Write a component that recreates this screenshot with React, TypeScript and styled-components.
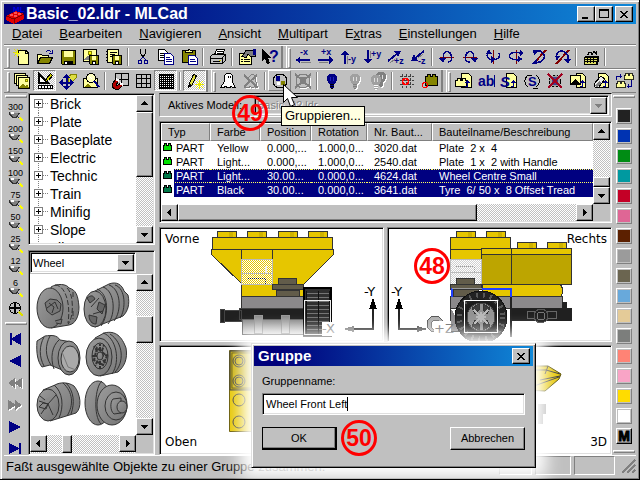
import React, { ReactNode } from "react";
import styled, { createGlobalStyle, css } from "styled-components";

const face = "#c0c0c0";
const shade = "#808080";
const navy = "#000080";
const sans = `"Liberation Sans", Arial, sans-serif`;

const raised = css`
  border: 1px solid;
  border-color: #fff #000 #000 #fff;
  box-shadow: inset -1px -1px 0 ${shade};
`;
const sunken = css`
  border: 1px solid;
  border-color: ${shade} #fff #fff ${shade};
  box-shadow: inset 1px 1px 0 #000, inset -1px -1px 0 #dfdfdf;
`;
const checker = css`
  background: repeating-conic-gradient(#fff 0 25%, ${face} 0 50%) 0 0 / 2px 2px;
`;

const GlobalStyle = createGlobalStyle`
  * { box-sizing: border-box; }
  body { margin: 0; background: ${face}; font-family: ${sans}; color: #000; }
  button, input, select { font-family: inherit; color: inherit; }
  svg { display: block; flex: none; overflow: visible; }
`;

const Window = styled.main`
  position: relative;
  display: grid;
  grid-template-rows: 20px 20px 24px 24px minmax(0, 1fr) 22px;
  height: 100vh;
  padding: 4px 3px 2px 4px;
  background: ${face};
  border-right: 1px solid #000;
  border-bottom: 1px solid #000;
  box-shadow: inset 1px 1px 0 #dfdfdf, inset 2px 2px 0 #fff, inset -1px -1px 0 ${shade};
  overflow: hidden;
`;
const TitleBar = styled.header`
  display: flex;
  align-items: center;
  padding: 0 3px 0 2px;
  color: #fff;
  background: linear-gradient(90deg, #00007b 10%, #1088d8);
`;
const Title = styled.h1<{ $size: number }>`
  flex: 1;
  margin: 0;
  padding-left: 2px;
  font-size: ${(p) => p.$size}px;
  line-height: 20px;
  font-weight: bold;
`;
const CaptionButton = styled.button<{ $gap?: boolean }>`
  ${raised}
  display: flex;
  align-items: center;
  justify-content: center;
  width: 18px;
  height: 16px;
  padding: 0;
  margin-left: ${(p) => (p.$gap ? 2 : 0)}px;
  background: ${face};
`;
const MenuBar = styled.nav`
  display: flex;
  align-items: center;
`;
const MenuItem = styled.button`
  padding: 0 9px 0 8px;
  border: 0;
  background: none;
  font-size: 13px;
  line-height: 18px;
`;
const ToolRow = styled.div`
  display: flex;
  align-items: stretch;
  padding-left: 3px;
  border-top: 1px solid ${shade};
  box-shadow: inset 0 1px 0 #fff;
`;
const Grip = styled.span`
  width: 3px;
  margin-top: 3px;
  border: 1px solid;
  border-color: #fff ${shade} ${shade} #fff;
`;
const BandEdge = styled.span`
  width: 6px;
  margin: 1px 1px 0 0;
  border-left: 2px solid ${shade};
  border-right: 1px solid #fff;
`;
const Separator = styled.span`
  width: 2px;
  margin: 3px 2px 2px;
  border-left: 1px solid ${shade};
  border-right: 1px solid #fff;
`;
const ToolButton = styled.button<{ $state?: "down" | "hover" }>`
  position: relative;
  display: flex;
  align-items: center;
  justify-content: center;
  width: 23px;
  height: 21px;
  margin-top: 1px;
  padding: 0;
  background: none;
  border: 1px solid transparent;
  ${(p) => p.$state === "down" && checker}
  ${(p) => p.$state === "down" && `border-color: ${shade} #fff #fff ${shade};`}
  ${(p) => p.$state === "hover" && `border-color: #fff ${shade} ${shade} #fff;`}
`;
const Tooltip = styled.span`
  position: absolute;
  z-index: 5;
  left: 12px;
  top: 35px;
  padding: 0 3px;
  background: #ffffe1;
  border: 1px solid #000;
  font-size: 13px;
  line-height: 18px;
  white-space: nowrap;
`;
const Pointer = styled.svg`
  position: absolute;
  z-index: 6;
  left: 14px;
  top: 13px;
`;

const Body = styled.div`
  display: grid;
  grid-template-columns: 24px 127px minmax(0, 1fr) 24px;
  min-height: 0;
`;
const Palette = styled.aside`
  display: flex;
  flex-direction: column;
  align-items: center;
  overflow: hidden;
  border-top: 1px solid ${shade};
  border-right: 1px solid ${face};
`;
const HGrip = styled.span<{ $tall?: boolean }>`
  flex: none;
  width: 22px;
  height: 3px;
  margin: ${(p) => (p.$tall ? "2px 0 3px" : "2px 0")};
  border: 1px solid;
  border-color: #fff ${shade} ${shade} #fff;
`;
const PaletteButton = styled.button`
  flex: none;
  display: flex;
  flex-direction: column;
  align-items: center;
  justify-content: center;
  width: 23px;
  height: 22px;
  padding: 0;
  border: 0;
  background: none;
  font-size: 9px;
  line-height: 8px;
`;
const Side = styled.section`
  display: grid;
  grid-template-rows: 152px minmax(0, 1fr);
  gap: 5px;
  min-height: 0;
  padding-top: 1px;
`;
const TreeFrame = styled.div`
  ${sunken}
  display: grid;
  grid-template-columns: minmax(0, 1fr) 17px;
  padding: 1px;
  background: #fff;
  min-height: 0;
`;
const Tree = styled.ul`
  margin: 0;
  padding: 0 0 0 4px;
  list-style: none;
  overflow: hidden;
`;
const TreeItem = styled.li`
  display: flex;
  align-items: center;
  height: 18px;
  font-size: 14px;
  line-height: 18px;
  white-space: nowrap;
`;
const PartsFrame = styled.div`
  ${sunken}
  display: flex;
  flex-direction: column;
  padding: 1px;
  min-height: 0;
`;
const SelectBox = styled.div<{ $flat?: boolean }>`
  ${sunken}
  display: flex;
  align-items: center;
  flex: ${(p) => (p.$flat ? "1" : "none")};
  height: ${(p) => (p.$flat ? 20 : 21)}px;
  margin-right: ${(p) => (p.$flat ? 2 : 17)}px;
  padding: 1px;
  background: ${(p) => (p.$flat ? face : "#fff")};
`;
const Select = styled.select`
  flex: 1;
  min-width: 0;
  padding: 0 1px;
  border: 0;
  appearance: none;
  background: transparent;
  font-size: 11px;
  &:disabled { color: ${shade}; opacity: 1; text-shadow: 1px 1px 0 #fff; }
`;
const PartsGrid = styled.div`
  display: grid;
  flex: 1;
  grid-template-columns: minmax(0, 1fr) 17px;
  grid-template-rows: minmax(0, 1fr) 18px;
  min-height: 0;
  margin-top: 1px;
`;
const PartsCanvas = styled.div`
  overflow: hidden;
  background: #fff;
`;
const Bar = styled.div<{ $row?: boolean }>`
  ${checker}
  display: flex;
  flex-direction: ${(p) => (p.$row ? "row" : "column")};
  min-width: 0;
  min-height: 0;
`;
const BarButton = styled.button`
  ${raised}
  flex: none;
  display: flex;
  align-items: center;
  justify-content: center;
  width: 17px;
  height: 17px;
  padding: 0;
  background: ${face};
`;
const Track = styled.span<{ $grow: number }>`
  flex: ${(p) => p.$grow} 1 0;
`;
const Thumb = styled.span<{ $grow: number }>`
  ${raised}
  flex: ${(p) => p.$grow} 1 0;
  background: ${face};
`;

const Center = styled.section`
  display: grid;
  grid-template-rows: 24px 102px minmax(0, 1fr);
  gap: 4px;
  min-width: 0;
  min-height: 0;
  padding: 1px 0 0 4px;
`;
const ModelBar = styled.div`
  position: relative;
  display: flex;
  align-items: center;
  padding-left: 8px;
  border: 1px solid;
  border-color: #000 #fff #fff ${shade};
`;
const ModelLabel = styled.label`
  width: 86px;
  font-size: 11px;
  white-space: nowrap;
`;
const ListFrame = styled.div`
  ${sunken}
  display: grid;
  grid-template-columns: minmax(0, 1fr) 17px;
  grid-template-rows: minmax(0, 1fr) 17px;
  padding: 1px;
  background: ${face};
`;
const ListArea = styled.div`
  background: #fff;
  overflow: hidden;
`;
const PartTable = styled.table`
  width: 100%;
  table-layout: fixed;
  border-collapse: separate;
  border-spacing: 0;
  font-size: 11px;
  line-height: 14px;
`;
const Th = styled.th<{ $w?: number }>`
  width: ${(p) => (p.$w ? `${p.$w}px` : "auto")};
  height: 18px;
  padding: 0 0 0 6px;
  background: ${face};
  border: 1px solid;
  border-color: #fff ${shade} ${shade} #fff;
  font-weight: normal;
  text-align: left;
  white-space: nowrap;
`;
const Tr = styled.tr<{ $on?: boolean; $focus?: boolean }>`
  color: ${(p) => (p.$on ? "#fff" : "#000")};
  background: ${(p) => (p.$on ? navy : "#fff")};
  td {
    border-top: 1px ${(p) => (p.$focus ? "dotted #ffff60" : "solid transparent")};
    border-bottom: 1px ${(p) => (p.$focus ? "dotted #ffff60" : "solid transparent")};
  }
`;
const Td = styled.td`
  height: 14px;
  padding: 0 0 0 7px;
  line-height: 12px;
  white-space: pre;
  &:first-child { padding: 0; }
`;
const TypeCell = styled.span`
  display: flex;
  gap: 2px;
`;
const TypeIcon = styled.span`
  display: block;
  width: 13px;
  height: 14px;
  margin: -1px 0;
  padding: 2px 0 0 2px;
  background: #fff;
`;

const Views = styled.div`
  display: grid;
  grid-template-columns: repeat(2, minmax(0, 1fr));
  grid-template-rows: 115px minmax(0, 1fr);
  gap: 3px;
  min-height: 0;
`;
const View = styled.figure`
  ${sunken}
  position: relative;
  margin: 0;
  padding: 1px;
  background: #fff;
  overflow: hidden;
`;
const ViewLabel = styled.figcaption<{ $right?: boolean; $bottom?: boolean }>`
  position: absolute;
  ${(p) => (p.$right ? "right: 4px;" : "left: 5px;")}
  ${(p) => (p.$bottom ? "bottom: 4px;" : "top: 3px;")}
  font-family: "DejaVu Sans", sans-serif;
  font-size: 12px;
  line-height: 16px;
`;

const Badge = styled.span<{ $x?: number; $y?: number }>`
  ${(p) => p.$x !== undefined && `position: absolute; left: ${p.$x}px; top: ${p.$y}px;`}
  z-index: 3;
  display: flex;
  flex: none;
  align-items: center;
  justify-content: center;
  width: 36px;
  height: 36px;
  border: 3px solid #f00;
  border-radius: 50%;
  color: #f00;
  font-size: 23px;
  font-weight: bold;
`;

const Swatch = styled.button<{ $c: string }>`
  flex: none;
  width: 16px;
  height: 16px;
  margin-bottom: 4px;
  padding: 0;
  background: ${(p) => p.$c};
  border: 1px solid;
  border-color: #fff ${shade} ${shade} #fff;
  box-shadow: inset 0 0 0 1px ${face};
`;
const MoreButton = styled.button`
  ${raised}
  flex: none;
  width: 16px;
  height: 16px;
  margin-bottom: 4px;
  padding: 0;
  background: ${face};
  font-size: 14px;
  font-weight: 900;
  line-height: 13px;
  -webkit-text-stroke: 1px #000;
`;
const Swatches = styled(Palette)`
  border-right: 0;
`;

const StatusBar = styled.footer`
  display: flex;
  align-items: stretch;
  gap: 3px;
  padding: 0 0 2px;
  border-top: 1px solid #fff;
`;
const StatusText = styled.p`
  flex: 1;
  margin: 0;
  padding-left: 2px;
  font-size: 13px;
  line-height: 22px;
  white-space: nowrap;
`;
const StatusPane = styled.span<{ $w: number }>`
  width: ${(p) => p.$w}px;
  border: 1px solid;
  border-color: ${shade} #fff #fff ${shade};
`;

const Dialog = styled.section`
  position: absolute;
  z-index: 4;
  left: 251px;
  top: 343px;
  width: 285px;
  padding: 2px;
  background: ${face};
  border: 1px solid;
  border-color: #dfdfdf #000 #000 #dfdfdf;
  box-shadow: inset 1px 1px 0 #fff, inset -1px -1px 0 ${shade}, 0 0 16px 10px #fff;
`;
const DialogBody = styled.form`
  display: grid;
  grid-template-rows: 15px 22px auto;
  gap: 4px;
  padding: 8px 8px 9px;
  font-size: 11px;
  line-height: 15px;
`;
const TextBox = styled.div`
  ${sunken}
  display: flex;
  align-items: center;
  padding: 0 3px;
  background: #fff;
`;
const TextInput = styled.input`
  field-sizing: content;
  padding: 0;
  border: 0;
  outline: 0;
  background: none;
  font-size: 11px;
`;
const Caret = styled.span`
  width: 1px;
  height: 14px;
  background: #000;
`;
const Actions = styled.div`
  display: flex;
  align-items: center;
  margin-top: 1px;
  gap: 4px;
`;
const PushButton = styled.button<{ $main?: boolean }>`
  ${raised}
  width: 75px;
  height: 23px;
  padding: 0;
  background: ${face};
  font-size: 11px;
  ${(p) => p.$main && "outline: 1px solid #000; outline-offset: -1px; border-right-width: 2px; border-bottom-width: 2px;"}
`;
const Spacer = styled.span`
  flex: 1;
`;

/* ---------- drawings ---------- */

const Ico = ({ children, w = 18, h = 18 }: { children: ReactNode; w?: number; h?: number }) => (
  <svg width={w} height={h} viewBox={`0 0 ${w} ${h}`} shapeRendering="crispEdges" fill="none" aria-hidden="true">
    {children}
  </svg>
);
const Y = "#ffff9c";
const O = "#848400";
const B = "#000084";
const K = "#000";
const G = "#808080";

const Disk = ({ x = 0, y = 0, s = 13 }) => (
  <g transform={`translate(${x} ${y})`}>
    <path d={`M.5 .5h${s - 1}v${s - 1}h${2 - s}l-1 -1z`} fill={O} stroke={K} />
    <path d={`M3 1h${s - 6}v${Math.floor(s / 2) - 1}h${6 - s}z`} fill={Y} />
    <path d={`M3 ${s - 4}h${s - 6}v3h${6 - s}z`} fill={K} />
    <path d={`M4 ${s - 3}h2v2h-2z`} fill="#fff" />
  </g>
);
const Sheet = ({ x = 0, y = 0, w = 9, h = 12, c = Y }) => (
  <g transform={`translate(${x} ${y})`}>
    <path d={`M.5 .5h${w - 4}l3 3v${h - 4}h${1 - w}z`} fill={c} stroke={K} />
    <path d={`M${w - 4}.5v3h3`} stroke={K} />
  </g>
);
const UpMark = () => <path d="M13.500 14v-6M11 10.500h5M12 9.500h3M13.500 14.500h-3" stroke={B} />;
const Lock = ({ x, y }: { x: number; y: number }) => (
  <path d={`M${x} ${y}h2v-2h3v2h2v-2h3v2h1v6h-11z`} fill={Y} stroke={K} />
);
const Bulb = ({ c, k = c }: { c: string; k?: string }) => (
  <>
    <path d="M6 2h6v1h1v1h1v5h-1v2h-1v1h-1v4h-4v-4h-1v-1h-1v-2h-1v-5h1v-1h1z" fill={c} />
    <path d="M7 12.500h4M7 14.500h4M8 16.500h2" stroke={k} />
    <path d="M7.500 5v4M10.500 5v4" stroke={c === B ? "#2020c0" : "#ddd"} />
  </>
);
const Person = ({ c, w }: { c: string; w: string }) => (
  <path d="M9.500 2.500h2l2 2v4l1 3 1 4h-2l-1 -1 -1 1h-2l-1 -1 -2 1h-3v-1l2 -2 1 -4v-3z" fill={w} stroke={c} />
);
const Tiny = ({ x, y, children }: { x: number; y: number; children: ReactNode }) => (
  <text x={x} y={y} fill={B} fontFamily="Liberation Sans" fontSize="9" fontWeight="bold">
    {children}
  </text>
);

const icons: Record<string, ReactNode> = {
  new: (<><path d="M0 4.500h9M4.500 1v8M1 1l7 7M1 8l7 -7" stroke="#d8d820" /><path d="M5.500 6v-4h7l3 3v11h-10v-8" fill={Y} stroke={K} /><path d="M12.500 2.500v3h3" stroke={K} /><path d="M4.500 3v5M2 5.500h5" stroke="#ff0" /></>),
  open: (<><path d="M1.500 15.500v-9h4l1 1h6v2" fill={Y} stroke={K} /><path d="M1.500 15.500l3 -6h12l-3 6z" fill={O} stroke={K} /><path d="M9.500 4.500l2 -2h2l2 2M13 5.500h4M16.500 2v4" stroke={B} /></>),
  save: <Disk x={2} y={2} s={15} />,
  saveImg: (<><path d="M1.500 1.500h13v12h-13z" fill={Y} stroke={K} /><path d="M2 12l4-5 4 5z" fill={G} /><circle cx="8" cy="5" r="2" fill="#ff0" stroke={O} /><Disk x={7} y={7} s={10} /></>),
  saveText: (<><path d="M2.500 1.500h11v13h-11z" fill={Y} stroke={K} /><path d="M3 3.500h-2M3 6.500h-2M3 9.500h-2M3 12.500h-2M5 4.500h7M5 6.500h5M5 8.500h3" stroke={K} /><Disk x={7} y={7} s={10} /></>),
  cut: (<><path d="M6.500 1v4l3 5M11.500 1v4l-3 5" stroke={K} /><path d="M9 9l-3 3M9 9l3 3" stroke={B} /><path d="M4.500 12.500h3v3h-3zM10.500 12.500h3v3h-3z" stroke={B} /></>),
  copy: (<><Sheet x={1} y={1} w={10} h={12} c="#fff" /><path d="M3 5.500h4M3 7.500h4M3 9.500h4" stroke={K} /><g transform="translate(7 5)"><path d="M.5 .5h6l3 3v8h-9z" fill="#fff" stroke={B} /><path d="M2 4.500h4M2 6.500h6M2 8.500h6" stroke={B} /></g></>),
  paste: (<><path d="M2.500 2.500h13v12h-13z" fill={O} stroke={K} /><path d="M5.500 4.500h7v-2h-2l-1 -1 -2 1h-2z" fill={Y} stroke={K} /><path d="M8.500 7.500h6l3 3v6h-9z" fill="#fff" stroke={B} /><path d="M10 11.500h5M10 13.500h6" stroke={B} /></>),
  print: (<><path d="M5.500 7l2 -5.500h8l-2 5.500" fill="#fff" stroke={K} /><path d="M1.500 8.500l2 -2h13v6l-3 3h-12z" fill={face} stroke={K} /><path d="M2 10.500h11l3 -4M4 13.500h7M8 3.500h6M8 5.500h5M13.500 11v4" stroke={K} /><path d="M10 12h2v1h-2z" fill="#cc0" /></>),
  props: (<><path d="M1.500 5.500h12v11h-12z" fill={Y} stroke={K} /><path d="M3 11.500h2M6 11.500h6M3 13.500h2M6 13.500h6" stroke={K} /><path d="M4 8.500l4 -6h9v6h-4l-3 -2-2 3z" fill={G} stroke={K} /><path d="M15 1h3v6h-3z" fill={B} /></>),
  help: (<><path d="M1 1v12l3-3 2 6 3-1-2-5h4z" fill={K} /><text x="8" y="14" fontFamily="Liberation Sans" fontSize="16" fontWeight="bold" fill={B}>?</text></>),
  xm: (<><Tiny x={6} y={7}>-x</Tiny><path d="M2 11h14v2h-14z" fill={B} /><path d="M6 8v8l-4-4z" fill={B} /><path d="M7 14.500h10" stroke={G} /></>),
  xp: (<><Tiny x={4} y={7}>+x</Tiny><path d="M1 11h14v2h-14z" fill={B} /><path d="M12 8v8l4-4z" fill={B} /><path d="M2 14.500h9" stroke={G} /></>),
  ym: (<><Tiny x={8} y={14}>-y</Tiny><path d="M4 3h2v13h-2z" fill={B} /><path d="M1 7h8l-4-5z" fill={B} /><path d="M7.500 8v8" stroke={G} /></>),
  yp: (<><Tiny x={8} y={9}>+y</Tiny><path d="M4 2h2v13h-2z" fill={B} /><path d="M1 11h8l-4 5z" fill={B} /><path d="M7.500 3v7" stroke={G} /></>),
  zp: (<><Tiny x={8} y={16}>+z</Tiny><path d="M2 13l10-8" stroke={B} strokeWidth="2" /><path d="M8 3h7l-3 6z" fill={B} /><path d="M4 15l5-4" stroke={G} /></>),
  zm: (<><Tiny x={9} y={16}>-z</Tiny><path d="M15 3l-10 8" stroke={B} strokeWidth="2" /><path d="M2 13l3-7 4 7z" fill={B} /><path d="M9 10l5-4" stroke={G} /></>),
  rx1: (<><path d="M2 9.500h14" stroke="#800000" /><path d="M5.500 11c-2-10 8-10 8-1 0 3-2 4-4 4" stroke={B} strokeWidth="1.500" /><path d="M1 10h7l-3 5z" fill={B} /></>),
  rx2: (<><path d="M2 9.500h14" stroke="#800000" /><path d="M12.500 11c2-10-8-10-8-1 0 3 2 4 4 4" stroke={B} strokeWidth="1.500" /><path d="M10 10h7l-3 5z" fill={B} /></>),
  ry1: (<><path d="M9.500 2v14" stroke="#800000" /><path d="M4 5c-5 9 15 9 11 0" stroke={B} strokeWidth="1.500" /><path d="M2 6h6l-3 -5zM7 8l5 3-5 4z" fill={B} /></>),
  ry2: (<><path d="M9.500 2v14" stroke="#800000" /><path d="M14 5c-15-3-15 7-3 7" stroke={B} strokeWidth="1.500" /><path d="M13 2v6l4-3zM11 8v6l5-3z" fill={B} /></>),
  rz1: (<><path d="M3 16l13-14" stroke="#800000" strokeWidth="2" /><path d="M4 3h6c8 3 4 13-5 11" stroke={B} strokeWidth="1.500" /><path d="M3 2h6l-5 5zM7 10v6h-5z" fill={B} /></>),
  rz2: (<><path d="M3 16l13-14" stroke="#800000" strokeWidth="2" /><path d="M4 12c-3-10 8-12 11-4v5" stroke={B} strokeWidth="1.500" /><path d="M2 8h5l-3 5zM11 11h7l-3 5z" fill={B} /></>),
  brick: (<><path d="M2 9h13v7h-13z" fill="#dede63" stroke={K} /><path d="M3 8.500h13v5l-2 2M3 11.500h12M3 13.500h12M5.500 8v7M8.500 8v7M11.500 8v7M5 6.500h1l1 -2h2l1 2 2-3 2 2v-3" stroke={K} /></>),
  pics: (<><path d="M1.500 1.500h11v10h-11z" fill={Y} stroke={K} /><path d="M3.500 3.500h11v10h-11z" fill={Y} stroke={K} /><path d="M5.500 5.500h11v11h-11z" fill={Y} stroke={K} /><path d="M6 16l4-5 2 3 2-2 2 4z" fill={O} /><path d="M12 7h2v2h-2z" fill="#ff0" stroke={O} /></>),
  draw: (<><path d="M3 2v9h9z" fill="#fff" stroke={K} strokeWidth="2" /><path d="M2.500 13.500h14v3h-14z" fill="#fff" stroke={K} /><path d="M5.500 14v2M8.500 14v2M11.500 14v2M14.500 14v2" stroke={K} /><path d="M9.500 9.500l1-3 4-5 2 2-4 5z" fill="#cc0" stroke={K} /></>),
  move: (<><path d="M9 5l4-3h4v4l-5 5h-3z" fill="#dede40" stroke={O} /><path d="M7.500 4v12M2 10.500h12" stroke={B} strokeWidth="2" /><path d="M4 6h7l-3.500-4zM4 14h7l-3.500 4zM4 7v7l-4-3.500zM11 7v7l4-3.500z" fill={B} /></>),
  zoomPic: (<><path d="M1.500 6.500h14v9h-14z" fill={Y} stroke={K} /><path d="M2 15l4-4 3 4z" fill={O} /><circle cx="9" cy="6" r="4.500" fill="#ffffc0" stroke={K} /><path d="M12 9l5 6" stroke={B} strokeWidth="2" /><path d="M7 4l3 3" stroke="#fff" /></>),
  magnet: (<><path d="M4.500 1.500h13v12h-13zM5 7.500h12M10.500 2v11" stroke={K} /><path d="M1 12l4-5 3 2-3 4 1 1 4-3 2 2-4 4h-4l-3-2z" fill="#b00000" stroke={K} /><path d="M5 7l3 2M9 11l3 2" stroke="#fff" strokeWidth="2" /></>),
  grid: (<path d="M2.500 2.500h14v13h-14zM7.500 2v14M12.500 2v14M2 6.500h14M2 11.500h14" stroke={K} />),
  fine: (<><path d="M2 2h15v15h-15z" fill={K} /><path d="M3 4.500h13M3 6.500h13M3 8.500h13M3 10.500h13M3 12.500h13M3 14.500h13" stroke="#fff" strokeDasharray="1 1" /></>),
  wand: (<><path d="M2.500 15.500l1-4 4-9 3 1-4 9z" fill="#dede40" stroke={K} /><path d="M2 15l2-3 2 1z" fill={K} /><path d="M9 12.500h9M13.500 8v9M10 9l7 7M10 16l7-7" stroke="#e8e800" /></>),
  ghost: (<><path d="M7.500 1.500h4l2 2v6l1 3 2 3h-3l-1 -1-2 1h-2l-2 -1-2 1h-3l2 -3 2-3v-6z" fill="#fff" stroke={K} /><path d="M9 4h1v2h-1zM11 4h1v2h-1z" fill={K} /></>),
  noGhost: (<><g transform="translate(1 1)"><Person c="#fff" w={face} /></g><Person c={G} w={face} /><path d="M2 3l13 12M15 3l-13 12" stroke={G} strokeWidth="2" /></>),
  group: (<><circle cx="9" cy="9" r="7" fill={face} stroke={K} /><path d="M5 4h4v5h-4z" fill={B} /><path d="M6 10h3v3h-3z" fill="#fff" /><path d="M10 9h4v4h-4z" fill={O} /></>),
  ungroup: (<><circle cx="10" cy="10" r="7" stroke="#fff" /><circle cx="9" cy="9" r="7" fill={face} stroke={G} /><path d="M6 5h6v7h-6z" fill={G} /><path d="M1 2l16 14M17 2l-16 14" stroke={G} strokeWidth="2" /></>),
  bulb: <Bulb c={B} k={K} />,
  bulbOff: (<><g transform="translate(1 1)"><Bulb c="#fff" /></g><Bulb c="#a0a0a0" k={G} /></>),
  bulbs: (<><g transform="translate(4 -1)"><Bulb c="#fff" /></g><g transform="translate(3 -2)"><Bulb c={G} /></g><g transform="translate(-2 1)"><Bulb c="#a0a0a0" k="#fff" /></g></>),
  snap: (<><path d="M4.500 2v14M8.500 2v14M12.500 2v14M2 4.500h14M2 8.500h14M2 12.500h14" stroke="#404040" strokeDasharray="3 1" /><circle cx="7.500" cy="9.500" r="3" stroke="#f00" strokeWidth="1.500" /></>),
  origin: (<><path d="M4.500 4.500h2v-2h3v2h2v-2h3v2h2v9h-12z" fill={O} stroke={K} /><circle cx="4" cy="13" r="2.500" stroke="#f00" /></>),
  addPart: (<><Sheet x={7} y={1} w={11} h={15} /><Lock x={1.500} y={8.500} /><UpMark /></>),
  ab: (<><text x="1" y="14" fontFamily="Liberation Sans" fontSize="14" fontWeight="bold" fill={B}>ab</text><path d="M17.500 3v12" stroke={B} /></>),
  sUp: (<><Sheet x={6} y={1} w={11} h={15} /><text x="0" y="15" fontFamily="Liberation Sans" fontSize="15" fontWeight="bold" fontStyle="italic" fill={B}>S</text><UpMark /></>),
  sRot: (<><path d="M5 15a7 7 0 0 1-1-11M13 3a7 7 0 0 1 0 12M4 3h5M10 16h5" stroke={K} /><text x="5" y="14" fontFamily="Liberation Sans" fontSize="13" fontWeight="bold" fill={B}>S</text></>),
  sDel: (<><circle cx="9" cy="9" r="6" fill="#a0a0a0" stroke={K} strokeDasharray="3 2" /><path d="M6 5h6v8h-6z" fill={B} opacity=".6" /><path d="M2 2l14 14M16 2l-14 14" stroke="#a00020" strokeWidth="2" /></>),
  imgUp: (<><Sheet x={7} y={1} w={10} h={15} /><path d="M1.500 3.500h10v9h-10z" fill={Y} stroke={K} /><path d="M2 12l4-5 5 5z" fill={K} /><UpMark /></>),
  erase: (<><Sheet x={6} y={1} w={11} h={15} /><path d="M2 12l7-8 4 3-6 8h-4z" fill="#eee" stroke={K} /><path d="M3 13l4 -4 2 2-3 4h-2z" fill={G} /><UpMark /></>),
  swap: (<><g transform="translate(8 -3) scale(.8)"><Lock x={1.500} y={7.500} /></g><g transform="translate(0 5) scale(.8)"><Lock x={1.500} y={7.500} /></g><path d="M1.500 8v-4h5M5 2v4M16.500 8v6h-5M13 12v4" stroke={B} /></>),
};

const Tool = ({ name, state, children }: { name: string; state?: "down" | "hover"; children?: ReactNode }) => (
  <ToolButton type="button" aria-label={name} $state={state}>
    <Ico>{icons[name]}</Ico>
    {children}
  </ToolButton>
);
const Tools = ({ names, down = [] }: { names: string[]; down?: string[] }) => (
  <>
    {names.map((n, i) =>
      n === "|" ? <Separator key={i} /> : <Tool key={i} name={n} state={down.includes(n) ? "down" : undefined} />
    )}
  </>
);

const arrows = { up: "M4 2h1v1h1v1h1v1h1v1h-7v-1h1v-1h1v-1h1z", down: "M1 3h7v1h-1v1h-1v1h-1v1h-1v-1h-1v-1h-1v-1h-1z", left: "M6 1v7h-1v-1h-1v-1h-1v-1h-1v-1h1v-1h1v-1h1v-1z", right: "M3 1v7h1v-1h1v-1h1v-1h1v-1h-1v-1h-1v-1h-1v-1z" };
const Arrow = ({ dir, c = K }: { dir: keyof typeof arrows; c?: string }) => (
  <Ico w={9} h={9}><path d={arrows[dir]} fill={c} /></Ico>
);
const Scroll = ({ row, parts }: { row?: boolean; parts: [number, number, number] }) => (
  <Bar $row={row}>
    <BarButton type="button" aria-label="Zurück"><Arrow dir={row ? "left" : "up"} /></BarButton>
    {parts[0] > 0 && <Track $grow={parts[0]} />}
    <Thumb $grow={parts[1]} />
    {parts[2] > 0 && <Track $grow={parts[2]} />}
    <BarButton type="button" aria-label="Weiter"><Arrow dir={row ? "right" : "down"} /></BarButton>
  </Bar>
);

const Lens = () => (
  <Ico w={16} h={9}>
    <path d="M2 1h9v3h-1v1h-1v1h-5v-1h-1v-1h-1z" fill={G} />
    <path d="M2 0h9v2h-9z" fill="#b0b0b0" />
    <path d="M3 1h3v2h-3z" fill="#fff" />
    <path d="M1.500 1v2l3 3h4l3-4M9 5l4 4" stroke="#303030" />
    <path d="M12 7l3 3" stroke="#ff0" strokeWidth="1.500" />
  </Ico>
);
const Close = () => (
  <Ico w={10} h={9}><path d="M1 1h2v1h1v1h2v-1h1v-1h2v1h-1v1h-1v1h-1v1h1v1h1v1h1v1h-2v-1h-1v-1h-2v1h-1v1h-2v-1h1v-1h1v-1h1v-1h-1v-1h-1v-1h-1z" fill={K} /></Ico>
);
const navPaths: [string, string][] = [
  ["M3 2h2v5l9-5v12l-9-5v5h-2z", B],
  ["M2 8l12-6v12z", B],
  ["M1 8l7-5v4l7-4v10l-7-4v4z", G],
  ["M15 8l-7-5v4l-7-4v10l7-4v4z", G],
  ["M14 8l-12-6v12z", B],
  ["M12 2h2v11h-2v-5l-10 5v-11l10 5z", B],
];

const Wheels = () => (
  <svg width="108" height="160" viewBox="29 274 108 160" stroke="#333" strokeWidth="1" aria-hidden="true">
    <defs>
      <linearGradient id="metal" x1="0" y1="0" x2="1" y2="1">
        <stop offset="0" stopColor="#9c9c9c" /><stop offset="1" stopColor="#747474" />
      </linearGradient>
    </defs>
    <g fill="url(#metal)">
      <path d="M50 287c6-4 16-3 18 1 7 2 9 7 10 19 0 10-4 17-10 18l-18 3z" />
      <path d="M54 285c10 0 16 18 13 38M66 288c7 6 7 30 1 36M72 292v7M72 311v8" fill="none" strokeDasharray="5 2" />
      <ellipse cx="49" cy="308" rx="13" ry="20" /><path d="M44 303l5-4 7 1 4 4-1 7-8 4-5-4zM48 303l5 4-2 6M46 308l8-6 3 7M54 321l7-2-1 5-5-1" fill="#777" />
    </g>
    <g fill="url(#metal)">
      <path d="M94 291l14-7c8-3 13 1 15 7l4 4c2 9 0 16-5 21l-28 11z" />
      <path d="M96 289c12 5 12 26 4 37M102 287c12 4 13 27 5 37M108 285c12 4 13 26 5 36M114 285c11 3 11 25 5 33" fill="none" />
      <ellipse cx="94" cy="309" rx="11" ry="18" /><path d="M86 298c4-3 6-3 8 1l-5 4zM98 302l6 3-3 9-5-5zM88 315l8 2-1 7c-4 0-7-3-7-9zM90 307l8-9M92 314l10-3" fill="#666" />
    </g>
    <g fill="url(#metal)">
      <path d="M36 341l8-5c7-1 12-1 15 4l12 2v32l-22-9-8 2c-4-5-6-13-5-26z" />
      <path d="M43 337c-5 9-5 20 0 29M49 336c-5 9-5 20 1 29M58 340c-7 6-9 18-5 29" fill="none" />
      <ellipse cx="68" cy="358" rx="11" ry="17" /><ellipse cx="69" cy="359" rx="9" ry="13" fill="#aaa" /><path d="M61 352l6 15 8 3" fill="none" stroke="#777" />
    </g>
    <g fill="url(#metal)">
      <path d="M94 338l9-5c12-3 18 4 22 15 2 11-2 19-8 24l-18 4z" />
      <path d="M102 333c13 4 18 28 9 41M109 334c14 9 14 29 5 38" fill="none" />
      <ellipse cx="98" cy="357" rx="13" ry="19" /><ellipse cx="99" cy="356" rx="8" ry="13" fill="#888" />
      <path d="M99 356l-6-10M99 356l-8 0M99 356l-5 10M99 356v13M99 356l6 8M99 356l8-1M99 356l4-11M99 356v-12M96 348l-3 12 9 5 4-9z" fill="none" strokeWidth="2" strokeDasharray="4 1" /><ellipse cx="99" cy="356" rx="3" ry="4" />
    </g>
    <g fill="url(#metal)">
      <path d="M42 390l12-5c5-3 13-3 19 1 7 8 8 22 2 27l-26 8z" />
      <path d="M53 385c9 7 10 22 5 33M62 383c10 9 11 22 4 33M65 383c8 8 9 20 5 31" fill="none" />
      <ellipse cx="47" cy="405" rx="11" ry="16" /><path d="M38 401l9 3 8-9M47 404l-7 10M47 404l5 11M39 396l5 4M42 403l-4 4 7 2 2-5z" fill="#888" />
    </g>
    <g fill="url(#metal)">
      <ellipse cx="97" cy="403" rx="13" ry="22" /><path d="M101 381c-7 5-9 35-1 43" fill="none" />
      <ellipse cx="111" cy="405" rx="15" ry="20" /><ellipse cx="115" cy="406" rx="11" ry="14" /><path d="M112 399l8-1v15l-7 1c-4-3-4-12-1-15z" /><ellipse cx="121" cy="407" rx="5" ry="6" />
    </g>
  </svg>
);

const axisFont = { fontFamily: "DejaVu Sans", fontSize: 13 };
const Mesh = ({ id, c }: { id: string; c: string }) => (
  <pattern id={id} width="2" height="2" patternUnits="userSpaceOnUse">
    <path d="M0 0h2v2h-2z" fill="#fff" /><path d="M0 0h1v1h-1zM1 1h1v1h-1z" fill={c} />
  </pattern>
);
const studs = (xs: number[], y: number, c = "#e6c600") =>
  xs.map((x) => (
    <g key={x}>
      <path d={`M${x} ${y}h19v6h-19z`} fill={c} stroke="#333" />
      <path d={`M${x + 12} ${y + 1}h4v5h-4z`} fill="#b89e00" opacity=".5" stroke="none" />
    </g>
  ));

const Front = () => (
  <svg width="222" height="111" viewBox="160 230 222 111" shapeRendering="crispEdges" fill="none" strokeWidth="1" aria-hidden="true">
    <defs>
      <Mesh id="meshFront" c="#e6c600" />
      <linearGradient id="low" x1="0" y1="0" x2="0" y2="1"><stop offset="0" stopColor="#888" /><stop offset="1" stopColor="#ddd" /></linearGradient>
    </defs>
    {studs([216, 246, 277, 307], 232)}
    <g stroke="#333" fill="#e6c600">
      <path d="M210.500 250.500h122v5l-30 30h-61l-31-30z" />
      <path d="M211.500 238.500h120v12h-120zM240.500 250.500h31v10h-31z" />
      <path d="M240.500 285.500h62v12h-62z" />
    </g>
    <path d="M240 260h31v25h-31z" fill="url(#meshFront)" />
    <path d="M240.500 260.500h31v25h-31zM240.500 274h31" stroke="#bbb" />
    <path d="M247 279.500h17.500v5" stroke="#222" strokeDasharray="1 1" />
    <path d="M265 267v7" stroke="#eee" strokeWidth="2" />
    <g stroke="#333" fill="#625c4a">
      <path d="M277.500 279.500h18v6h-18zM275.500 291.500h23v6h-23zM271.500 285.500h31v5h-31z" />
    </g>
    <path d="M240.500 297.500h62v12h-62z" fill="#8b898b" stroke="#333" />
    <path d="M238.500 309.500h64v11h-64zM219.500 310.500h4v13h-4zM223.500 311.500h17v11h-17z" fill="#202020" stroke="#444" />
    <path d="M241 320h61v15h-61z" fill="url(#low)" stroke="#666" />
    <path d="M253.500 316.500h8v18h-8zM280.500 316.500h8v18h-8z" fill="url(#low)" stroke="#999" />
    <path d="M303 289h27v48h-27z" fill="#303030" stroke="#000" strokeWidth="2" />
    <path d="M306 294h22M306 298h22M306 302h22M306 306h22M306 310h22M306 314h22M306 318h22M306 322h22M306 326h22M306 330h22" stroke="#757575" />
    <path d="M317.500 292v43M305.500 292v43M328.500 292v43" stroke="#111" />
    <path d="M303.500 301.500h26v34h-26z" stroke="#eee" />
    <path d="M321 323h18v14h-18z" fill="#fff" />
    <text x="321" y="334" {...axisFont} fill="#888">-X</text>
    <text x="363" y="297" {...axisFont} fill="#000">-Y</text>
    <path d="M372 309v21h-24" stroke="#222" strokeWidth="2" />
    <path d="M372 299l4 11h-8z" fill="#000" /><path d="M342 330l11-3v6z" fill="#777" />
  </svg>
);
const RightSide = () => (
  <svg width="222" height="111" viewBox="389 230 222 111" shapeRendering="crispEdges" fill="none" aria-hidden="true">
    <defs><Mesh id="meshRight" c="#d0d0d0" /></defs>
    {studs([456, 486], 232)}
    {studs([517, 547], 243)}
    <g stroke="#333" fill="#e6c600">
      <path d="M450.500 238.500h60v12h-60zM450.500 250.500h31v10h-31z" />
      <path d="M481.500 249.500h90v6h-90z" />
      <path d="M481.500 255.500h90v30h-90z" fill="#bda500" />
      <path d="M511.500 249v36" />
      <path d="M482.500 285.500h78l2 4v5l-2 3h-78z" />
    </g>
    <path d="M450 260h31v25h-31z" fill="url(#meshRight)" />
    <path d="M450.500 260.500h31v25h-31zM451 273.500h30" stroke="#bbb" />
    <path d="M456 267.500h18v6" stroke="#999" strokeDasharray="1 1" />
    <g stroke="#333" fill="#625c4a"><path d="M456.500 279.500h18v6h-18zM450.500 285.500h31v5h-31zM453.500 290.500h25v7h-25z" /></g>
    <path d="M450.500 297.500h112v12h-112zM450.500 309v23h14" fill="#8b898b" stroke="#333" />
    <path d="M511.500 309.500h60v12h-60zM562.500 303.500h4v6h-4z" fill="#202020" stroke="#222" />
    <path d="M527 312h11v7h-11zM545 312h11v7h-11z" stroke="#666" />
    <circle cx="541" cy="317" r="7" fill="#202020" stroke="#555" /><circle cx="541" cy="317" r="4" stroke="#777" />
    <path d="M482 289.500h29" stroke="#2040ff" strokeWidth="2" /><path d="M510.500 289v9M451.500 289v9" stroke="#2040ff" strokeWidth="2" />
    <path d="M452 289.500h30" stroke="#999" />
    <path d="M510.500 298v40" stroke="#222" strokeWidth="2" />
    <circle cx="481" cy="318" r="26" fill="#222" stroke="#111" />
    <circle cx="481" cy="318" r="22" stroke="#585858" strokeWidth="5" strokeDasharray="2 5" />
    <circle cx="481" cy="318" r="18" fill="#1b1b1b" />
    <path d="M464.500 301.500h33v32h-33z" stroke="#fff" />
    <circle cx="481" cy="318" r="14" fill="#929292" stroke="#444" />
    <g stroke="#333" fill="#3c3c3c"><path d="M472 309l7-4v6l-4 4zM490 309l-7-4v6l4 4zM472 327l7 4v-6l-4-4zM490 327l-7 4v-6l4-4z" /></g>
    <path d="M474 311l14 14M488 311l-14 14M481 313v10M476 318h10" stroke="#b8b8b8" strokeWidth="2" />
    <circle cx="435" cy="325" r="8" fill="#b0b0b0" stroke="#555" /><circle cx="436" cy="326" r="5" fill="#fff" stroke="#777" />
    <path d="M434 322h17v14h-17z" fill="#fff" />
    <text x="434" y="334" {...axisFont} fill="#666">+Z</text>
    <text x="391" y="297" {...axisFont} fill="#000">-Y</text>
    <path d="M399 309v21h22" stroke="#222" strokeWidth="2" />
    <path d="M399 299l4 11h-8z" fill="#000" /><path d="M428 330l-11-3v6z" fill="#444" />
  </svg>
);
const Top = () => (
  <svg width="222" height="107" viewBox="161 347 222 107" fill="none" stroke="#333" aria-hidden="true">
    <path d="M229.500 350.500h40v81h-40z" fill="#e6c600" stroke="#665800" />
    <path d="M230 351h38v39h-38z" fill="#a89200" /><path d="M232 353h38v35h-38z" fill="#c9ae00" stroke="#665800" />
    {[361, 381, 400, 422].map((y) => <circle key={y} cx="239" cy={y} r="6" />)}
    <circle cx="239" cy="361" r="4" /><circle cx="239" cy="381" r="4" />
  </svg>
);
const Perspective = () => (
  <svg width="222" height="107" viewBox="389 347 222 107" fill="none" aria-hidden="true">
    <path d="M524 366h24l13 8-2 5-14 12-21-1z" fill="#e6c600" stroke="#554c00" />
    <path d="M530 370h16l14 4M540 380l20-4M534 386l25-9M548 366l-3 8" stroke="#333" />
    <path d="M538 404h8v10h-3v10h-5z" fill="#aaa" />
  </svg>
);

/* ---------- data ---------- */

const menus = [["", "D", "atei"], ["", "B", "earbeiten"], ["", "N", "avigieren"], ["", "A", "nsicht"], ["", "M", "ultipart"], ["E", "x", "tras"], ["", "E", "instellungen"], ["", "H", "ilfe"]];
const categories = ["Brick", "Plate", "Baseplate", "Electric", "Technic", "Train", "Minifig", "Slope", "Tile"];
const zooms = ["300", "200", "150", "100", "75", "50", "25", "12", "6"];
const swatches = ["#222", "#0033b2", "#008c14", "#0099a0", "#c40026", "#df6695", "#5c2000", "#9b9b9b", "#6b6550", "#68a9db", "#e4cb98", "#7c7e7c", "#ff8375", "#f9a4c6", "#ffdc00", "#fff"];
const rows = [
  { color: "Yellow", pos: "0.000,...", rot: "1.000,0...", file: "3020.dat", name: "Plate  2 x  4" },
  { color: "Light...", pos: "0.000,...", rot: "1.000,0...", file: "2540.dat", name: "Plate  1 x  2 with Handle" },
  { color: "Light...", pos: "30.00...", rot: "0.000,0...", file: "4624.dat", name: "Wheel Centre Small", on: true, focus: true },
  { color: "Black", pos: "30.00...", rot: "0.000,0...", file: "3641.dat", name: "Tyre  6/ 50 x  8 Offset Tread", on: true },
];

export default function App() {
  return (
    <Window>
      <GlobalStyle />
      <TitleBar>
        <Ico w={18} h={18}>
          <text x="7" y="7" fontFamily="Liberation Sans" fontSize="8" fontWeight="bold" fill="#0000e0">ML</text>
          <path d="M0 11l10-5 8 3v5l-10 5-8-4z" fill="#e00000" />
          <path d="M0 11l8 3v5M8 14l10-5" stroke="#800000" />
          <path d="M4 9h3v2h-3zM8 7h3v2h-3zM8 10h3v2h-3zM12 8h3v2h-3z" fill="#ff5050" />
        </Ico>
        <Title $size={16}>Basic_02.ldr - MLCad</Title>
        <CaptionButton aria-label="Minimieren"><Ico w={10} h={9}><path d="M1 7h6v2h-6z" fill={K} /></Ico></CaptionButton>
        <CaptionButton aria-label="Maximieren"><Ico w={10} h={10}><path d="M.5 .5h9v8h-9zM0 1.500h9" stroke={K} /></Ico></CaptionButton>
        <CaptionButton aria-label="Schließen" $gap><Close /></CaptionButton>
      </TitleBar>
      <MenuBar>
        {menus.map(([a, u, b]) => <MenuItem key={u + b}>{a}<u>{u}</u>{b}</MenuItem>)}
      </MenuBar>
      <ToolRow>
        <Grip />
        <Tools names={["new", "open", "save", "saveImg", "saveText", "|", "cut", "copy", "paste", "|", "print", "|", "props", "help"]} />
        <BandEdge /><Grip />
        <Tools names={["xm", "xp", "ym", "yp", "zp", "zm", "|", "rx1", "rx2", "ry1", "ry2", "rz1", "rz2", "|", "brick"]} />
        <Separator />
      </ToolRow>
      <ToolRow>
        <Grip />
        <Tools names={["pics", "draw", "move", "zoomPic", "|", "magnet", "grid", "fine", "|", "wand"]} down={["draw", "fine", "wand"]} />
        <BandEdge /><Grip />
        <Tools names={["ghost", "noGhost", "|"]} />
        <Tool name="group" state="hover">
          <Tooltip role="tooltip">Gruppieren...</Tooltip>
          <Pointer width="18" height="24" viewBox="0 0 18 24">
            <path d="M.5 .5v18l4-4 3 8 4-2-3-7h6z" fill="#fff" stroke="#000" />
          </Pointer>
        </Tool>
        <Tools names={["ungroup", "|", "bulb", "bulbOff", "bulbs", "|", "snap", "origin"]} />
        <BandEdge /><Grip />
        <Tools names={["addPart", "ab", "sUp", "sRot", "sDel", "imgUp", "erase", "swap"]} />
      </ToolRow>

      <Body>
        <Palette>
          <HGrip />
          {zooms.map((z) => <PaletteButton key={z}>{z}<Lens /></PaletteButton>)}
          <PaletteButton aria-label="Einpassen">
            <Ico w={16} h={15}>
              <circle cx="7" cy="6" r="5.500" fill={face} stroke={K} /><path d="M7 1v10M2 6h10" stroke={K} strokeWidth="1.500" /><path d="M11 10l4 4" stroke="#dd0" strokeWidth="2" />
            </Ico>
          </PaletteButton>
          <HGrip $tall />
          {navPaths.map(([d, c], i) => (
            <PaletteButton key={i} aria-label={`Schritt ${i + 1}`}>
              <Ico w={17} h={16}>{c === G && <path d={d} fill="#fff" transform="translate(1 1)" />}<path d={d} fill={c} /></Ico>
            </PaletteButton>
          ))}
        </Palette>

        <Side>
          <TreeFrame>
            <Tree>
              {categories.map((c, i) => (
                <TreeItem key={c}>
                  <Ico w={16} h={18}>
                    <path d={i === 0 ? "M4.500 13v5" : "M4.500 0v18"} stroke={G} strokeDasharray="1 1" />
                    <path d="M9 8.500h5" stroke={G} strokeDasharray="1 1" />
                    <path d="M.5 4.500h8v8h-8z" fill="#fff" stroke={G} /><path d="M2 8.500h5M4.500 6v5" stroke={K} />
                  </Ico>
                  {c}
                </TreeItem>
              ))}
            </Tree>
            <Scroll parts={[0, 65, 50]} />
          </TreeFrame>
          <PartsFrame>
            <SelectBox>
              <Select aria-label="Kategorie" defaultValue="Wheel"><option>Wheel</option></Select>
              <BarButton as="span"><Arrow dir="down" /></BarButton>
            </SelectBox>
            <PartsGrid>
              <PartsCanvas><Wheels /></PartsCanvas>
              <Scroll parts={[25, 25, 75]} />
              <Scroll row parts={[16, 8, 50]} />
            </PartsGrid>
          </PartsFrame>
        </Side>

        <Center>
          <ModelBar>
            <ModelLabel htmlFor="model">Aktives Modell:</ModelLabel>
            <SelectBox $flat>
              <Select id="model" disabled defaultValue="m"><option value="m">Basic_02.ldr</option></Select>
              <BarButton as="span"><Arrow dir="down" c={G} /></BarButton>
            </SelectBox>
            <Badge $x={72} $y={1}>49</Badge>
          </ModelBar>
          <ListFrame>
            <ListArea>
              <PartTable>
                <thead>
                  <tr>
                    <Th $w={49}>Typ</Th><Th $w={50}>Farbe</Th><Th $w={51}>Position</Th><Th $w={56}>Rotation</Th><Th $w={65}>Nr. Baut...</Th><Th>Bauteilname/Beschreibung</Th>
                  </tr>
                </thead>
                <tbody>
                  {rows.map((r) => (
                    <Tr key={r.file} $on={r.on} $focus={r.focus}>
                      <Td><TypeCell><TypeIcon><Ico w={10} h={9}><path d="M.5 2.500h1v-2h2v2h2v-2h2v2h1v5h-8z" fill={r.on ? "#007848" : "#00e000"} stroke={K} /></Ico></TypeIcon>PART</TypeCell></Td>
                      <Td>{r.color}</Td><Td>{r.pos}</Td><Td>{r.rot}</Td><Td>{r.file}</Td><Td>{r.name}</Td>
                    </Tr>
                  ))}
                </tbody>
              </PartTable>
            </ListArea>
            <Scroll parts={[38, 8, 0]} />
            <Scroll row parts={[0, 294, 98]} />
          </ListFrame>
          <Views>
            <View><Front /><ViewLabel>Vorne</ViewLabel></View>
            <View><RightSide /><ViewLabel $right>Rechts</ViewLabel><Badge $x={26} $y={20}>48</Badge></View>
            <View><Top /><ViewLabel $bottom>Oben</ViewLabel></View>
            <View><Perspective /><ViewLabel $right $bottom>3D</ViewLabel></View>
          </Views>
        </Center>

        <Swatches>
          <HGrip />
          <Spacer />
          {swatches.map((c) => <Swatch key={c} $c={c} aria-label={c} />)}
          <MoreButton>M</MoreButton>
          <HGrip />
        </Swatches>
      </Body>

      <StatusBar>
        <StatusText>Faßt ausgewählte Objekte zu einer Gruppe zusammen.</StatusText>
        <StatusPane $w={33} /><StatusPane $w={36} /><StatusPane $w={41} />
        <Ico w={18} h={18}><path d="M4 17L17 4M9 17l8-8M14 17l3-3" stroke={G} strokeWidth="2" /></Ico>
      </StatusBar>

      <Dialog role="dialog" aria-labelledby="dialog-title">
        <TitleBar>
          <Title as="h2" id="dialog-title" $size={15}>Gruppe</Title>
          <CaptionButton aria-label="Schließen"><Close /></CaptionButton>
        </TitleBar>
        <DialogBody>
          <label htmlFor="group-name">Gruppenname:</label>
          <TextBox><TextInput id="group-name" defaultValue="Wheel Front Left" /><Caret /></TextBox>
          <Actions>
            <PushButton type="button" $main>OK</PushButton>
            <Badge>50</Badge>
            <Spacer />
            <PushButton type="button">Abbrechen</PushButton>
          </Actions>
        </DialogBody>
      </Dialog>
    </Window>
  );
}
